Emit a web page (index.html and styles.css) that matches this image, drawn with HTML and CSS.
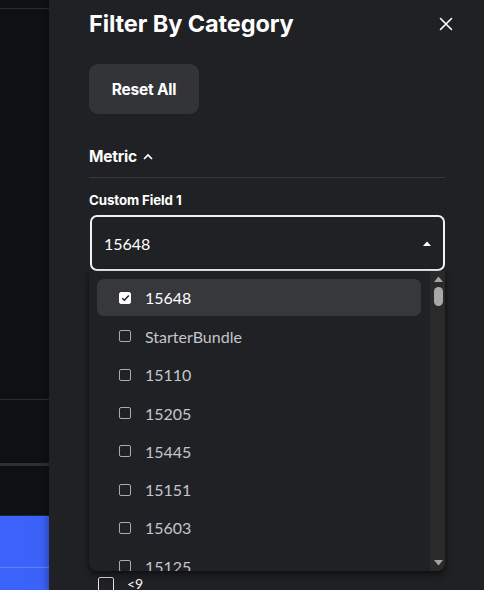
FILE: index.html
```html
<!DOCTYPE html>
<html>
<head>
<meta charset="utf-8">
<link rel="stylesheet" href="styles.css">
</head>
<body>
<div class="page">
  <div class="backdrop">
    <div class="bd-top"></div>
    <div class="bd-line"></div>
    <div class="bd-mid"></div>
    <div class="bd-line"></div>
    <div class="bd-mid2"></div>
    <div class="bd-thick"></div>
    <div class="bd-mid3"></div>
    <div class="bd-blue">
      <div class="bd-blue-line"></div>
    </div>
  </div>
  <div class="drawer">
    <div class="header">
      <h1 class="title">Filter By Category</h1>
      <svg class="close" width="14" height="14" viewBox="0 0 14 14"><path d="M1.5 1.5L12.5 12.5M12.5 1.5L1.5 12.5" stroke="#ffffff" stroke-width="1.6" stroke-linecap="round"/></svg>
    </div>
    <button class="reset">Reset All</button>
    <div class="section">
      <span>Metric</span>
      <svg class="chev" width="10" height="7" viewBox="0 0 10 7"><path d="M1 6L5 2L9 6" fill="none" stroke="#ffffff" stroke-width="1.7"/></svg>
    </div>
    <div class="field-label">Custom Field 1</div>
    <div class="select">
      <span>15648</span>
      <svg width="8" height="5" viewBox="0 0 8 5"><path d="M0 5L4 0.5L8 5Z" fill="#ffffff"/></svg>
    </div>
    <div class="list">
      <div class="items">
        <div class="item selected"><span class="cb checked"><svg width="9" height="8" viewBox="0 0 9 8"><path d="M1.2 4.2L3.4 6.2L7.8 1.5" fill="none" stroke="#202124" stroke-width="1.5"/></svg></span><span>15648</span></div>
        <div class="item"><span class="cb"></span><span>StarterBundle</span></div>
        <div class="item"><span class="cb"></span><span>15110</span></div>
        <div class="item"><span class="cb"></span><span>15205</span></div>
        <div class="item"><span class="cb"></span><span>15445</span></div>
        <div class="item"><span class="cb"></span><span>15151</span></div>
        <div class="item"><span class="cb"></span><span>15603</span></div>
        <div class="item"><span class="cb"></span><span>15125</span></div>
      </div>
      <div class="scrollbar">
        <svg class="arrow" width="9" height="6" viewBox="0 0 9 6"><path d="M0 6L4.5 0.5L9 6Z" fill="#a3a3a3"/></svg>
        <div class="thumb"></div>
        <div class="grow"></div>
        <svg class="arrow" width="9" height="6" viewBox="0 0 9 6"><path d="M0 0L4.5 5.5L9 0Z" fill="#a3a3a3"/></svg>
      </div>
    </div>
    <div class="row-below"><span class="cb big"></span><span>&lt;9</span></div>
  </div>
</div>
</body>
</html>
```

FILE: styles.css
```css
* { box-sizing: border-box; }
html, body { margin: 0; padding: 0; }
body {
  width: 484px;
  height: 590px;
  overflow: hidden;
  background: #202124;
  font-family: Lato, "Noto Sans", sans-serif;
  color: #ffffff;
}
.page {
  display: flex;
  height: 590px;
}
.backdrop {
  width: 49px;
  flex: none;
  display: flex;
  flex-direction: column;
  background: #0f1013;
}
.backdrop > div { flex-shrink: 0; }
.bd-top { height: 8px; }
.bd-line { height: 1px; background: #2c2d31; }
.bd-mid { height: 390px; }
.bd-mid2 { height: 63px; }
.bd-thick { height: 3px; background: #2e2f33; }
.bd-mid3 { height: 50px; border-bottom: 1px solid #1d2540; }
.backdrop > .bd-blue {
  flex: 1 0 auto;
  background: linear-gradient(90deg, #3b62fb 0%, #3c63f8 70%, #3a5ef0 100%);
  padding-top: 51px;
}
.bd-blue-line { height: 1px; background: #5f80fb; }

.drawer {
  flex: 1;
  background: #202124;
  padding: 0 39px 0 40px;
  display: flex;
  flex-direction: column;
  overflow: hidden;
  box-shadow: -2px 0 6px rgba(0,0,0,0.25);
}
.drawer > * { flex-shrink: 0; }
.header {
  display: flex;
  align-items: center;
  justify-content: space-between;
  height: 48px;
}
.title {
  margin: 0;
  font-family: Inter, Lato, sans-serif;
  font-size: 23.5px;
  font-weight: 700;
  letter-spacing: -0.1px;
  line-height: 48px;
  color: #ffffff;
}
.close { margin-right: -8px; }
.reset {
  align-self: flex-start;
  margin-top: 16px;
  width: 110px;
  height: 50px;
  border: none;
  border-radius: 9px;
  background: #333438;
  color: #ffffff;
  font-family: Inter, Lato, sans-serif;
  font-weight: 700;
  font-size: 15.5px;
  letter-spacing: -0.2px;
  padding: 0;
}
.section {
  margin-top: 31px;
  line-height: 24px;
  display: flex;
  align-items: center;
  gap: 6px;
  font-family: Inter, Lato, sans-serif;
  font-weight: 700;
  font-size: 15.5px;
  letter-spacing: -0.2px;
  border-bottom: 1px solid #36373b;
  padding-bottom: 8px;
}
.chev { margin-top: -2px; }
.field-label {
  margin-top: 14px;
  font-family: Inter, Lato, sans-serif;
  font-size: 13.3px;
  font-weight: 700;
  letter-spacing: -0.1px;
  line-height: 16px;
}
.select {
  margin-top: 7px;
  margin-left: 1px;
  height: 56px;
  border: 2px solid #f2f2f2;
  border-radius: 7px;
  display: flex;
  align-items: center;
  justify-content: space-between;
  padding: 0 12px 0 12px;
  font-size: 16px;
  color: #ffffff;
}
.list {
  height: 300px;
  background: #202124;
  border-radius: 0 0 8px 8px;
  box-shadow: 0 4px 10px rgba(0,0,0,0.45), 0 1px 3px rgba(0,0,0,0.3);
  display: flex;
  overflow: hidden;
  position: relative;
  z-index: 2;
}
.items {
  flex: 1;
  padding: 8px 9px 0 8px;
  display: flex;
  flex-direction: column;
}
.item {
  height: 38.3px;
  flex: none;
  display: flex;
  align-items: center;
  padding-left: 22px;
  gap: 14px;
  font-size: 16px;
  color: #c3c6cc;
  border-radius: 7px;
}
.item.selected {
  height: 37px;
  margin-bottom: 1.3px;
  background: #37383c;
  color: #ffffff;
}
.cb {
  width: 12px;
  height: 12px;
  border: 1.5px solid #a9abaf;
  border-radius: 2px;
  flex: none;
  display: flex;
  align-items: center;
  justify-content: center;
}
.cb.checked {
  background: #ffffff;
  border-color: #ffffff;
}
.scrollbar {
  width: 15px;
  flex: none;
  background: #2a2a2b;
  display: flex;
  flex-direction: column;
  align-items: center;
  padding: 5px 0 5px 1px;
}
.arrow { flex: none; }
.thumb {
  margin-top: 5px;
  width: 9px;
  height: 19px;
  border-radius: 5px;
  background: #a8a8a8;
}
.grow { flex: 1; }
.row-below {
  margin-top: 4px;
  margin-left: 9px;
  display: flex;
  align-items: flex-start;
  gap: 13px;
  font-size: 14px;
  line-height: 18px;
  color: #ffffff;
}
.cb.big {
  width: 16px;
  height: 16px;
  margin-top: 2px;
  border: 1.5px solid #e6e6e6;
}
```
